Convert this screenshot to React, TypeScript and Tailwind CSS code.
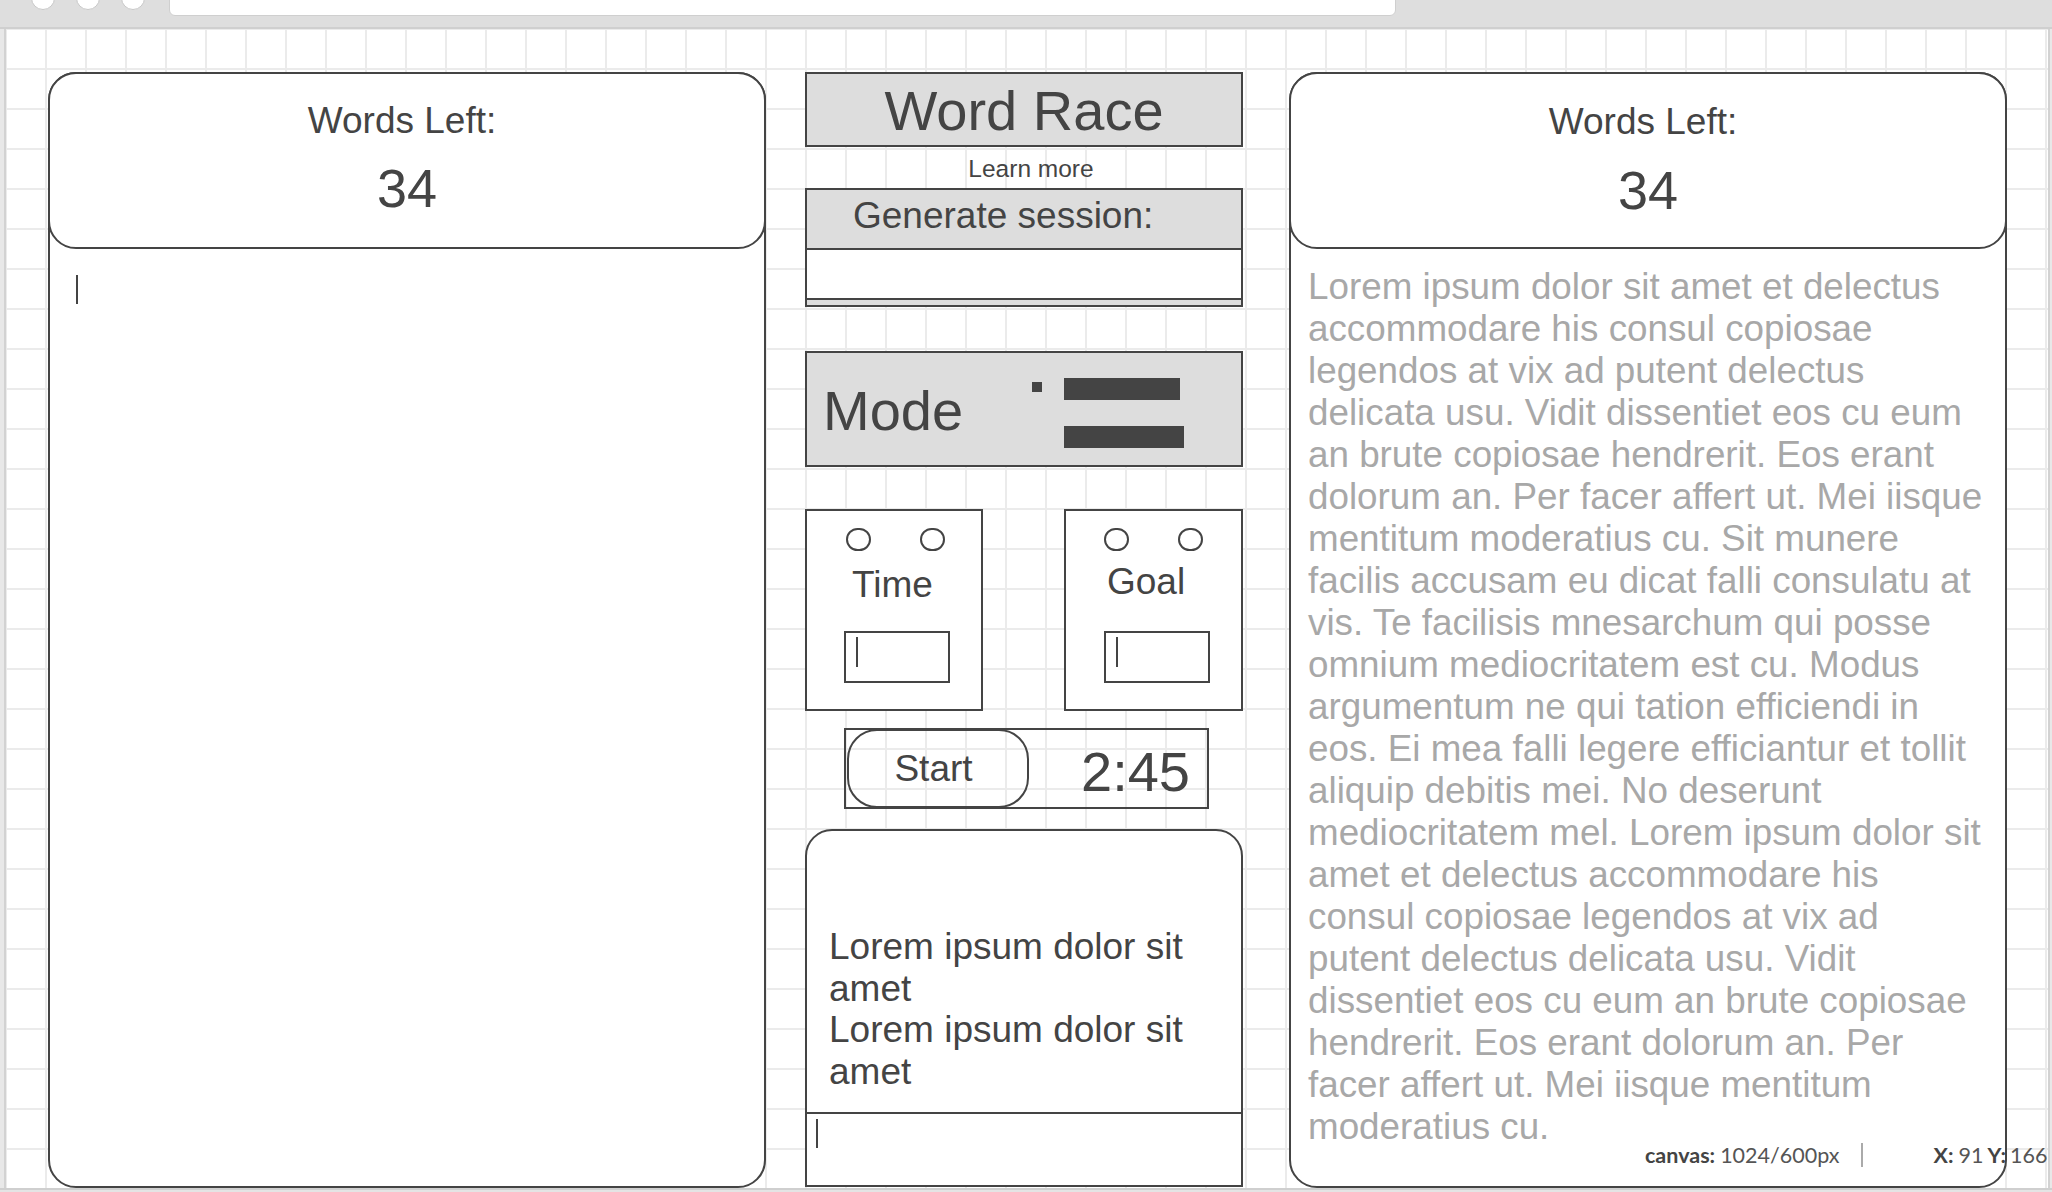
import React from "react";

const passage = [
  "Lorem ipsum dolor sit amet et delectus",
  "accommodare his consul copiosae",
  "legendos at vix ad putent delectus",
  "delicata usu. Vidit dissentiet eos cu eum",
  "an brute copiosae hendrerit. Eos erant",
  "dolorum an. Per facer affert ut. Mei iisque",
  "mentitum moderatius cu. Sit munere",
  "facilis accusam eu dicat falli consulatu at",
  "vis. Te facilisis mnesarchum qui posse",
  "omnium mediocritatem est cu. Modus",
  "argumentum ne qui tation efficiendi in",
  "eos. Ei mea falli legere efficiantur et tollit",
  "aliquip debitis mei. No deserunt",
  "mediocritatem mel. Lorem ipsum dolor sit",
  "amet et delectus accommodare his",
  "consul copiosae legendos at vix ad",
  "putent delectus delicata usu. Vidit",
  "dissentiet eos cu eum an brute copiosae",
  "hendrerit. Eos erant dolorum an. Per",
  "facer affert ut. Mei iisque mentitum",
  "moderatius cu.",
];

function Caret({ className = "" }: { className?: string }) {
  return <span className={"block w-[2px] bg-[#444] " + className} />;
}

function WordsLeft({ children, lower }: { children?: React.ReactNode; lower?: boolean }) {
  return (
    <div className="flex h-[1116px] w-[718px] shrink-0 flex-col rounded-[28px] border-2 border-[#444] bg-white">
      {/* counter header sits on top of the panel outline */}
      <div className="-mx-[2px] -mt-[2px] flex h-[177px] shrink-0 flex-col items-center rounded-[28px] border-2 border-[#444] bg-white">
        <p className={"pr-[10px] text-[37px] leading-[42px] " + (lower ? "mt-[27px]" : "mt-[26px]")}>
          Words Left:
        </p>
        <p className={"text-[54px] leading-[60px] " + (lower ? "mt-[17px]" : "mt-[16px]")}>34</p>
      </div>
      {children}
    </div>
  );
}

function OptionBox({ label, wide }: { label: string; wide?: boolean }) {
  const isTime = label === "Time";
  return (
    <div
      className={
        "flex h-[202px] flex-col items-start border-2 border-[#444] bg-white " +
        (wide ? "w-[179px]" : "w-[178px]")
      }
    >
      <div className={"mt-[17px] flex gap-[49px] " + (isTime ? "ml-[39px]" : "ml-[38px]")}>
        <span className="h-[23px] w-[25px] rounded-full border-2 border-[#444]" />
        <span className="h-[23px] w-[25px] rounded-full border-2 border-[#444]" />
      </div>
      <p
        className={
          "text-[37px] leading-[42px] " +
          (isTime ? "mt-[13px] ml-[45px]" : "mt-[10px] ml-[41px]")
        }
      >
        {label}
      </p>
      <div
        className={
          "h-[52px] w-[106px] border-2 border-[#444] " +
          (isTime ? "mt-[25px] ml-[37px]" : "mt-[28px] ml-[38px]")
        }
      >
        <Caret className="mt-[4px] ml-[10px] h-[30px]" />
      </div>
    </div>
  );
}

export default function App() {
  return (
    <div className="relative h-[1192px] w-[2052px] overflow-hidden bg-white font-['Liberation_Sans',Arial,sans-serif] text-[#444]">
      {/* browser chrome */}
      <div className="flex h-[29px] items-start border-b-2 border-[#cfcfcf] bg-[#dedede]">
        <div className="ml-[31px] -mt-[14px] flex gap-[21px]">
          <span className="h-[24px] w-[24px] rounded-full border border-[#c8c8c8] bg-white" />
          <span className="h-[24px] w-[24px] rounded-full border border-[#c8c8c8] bg-white" />
          <span className="h-[24px] w-[24px] rounded-full border border-[#c8c8c8] bg-white" />
        </div>
        <div className="-mt-px ml-[24px] h-[17px] w-[1227px] rounded-b-[6px] border border-[#cfcfcf] bg-white" />
      </div>

      <div className="flex h-[1159px]">
        <div className="w-[6px] shrink-0 border-r-2 border-[#d2d2d2] bg-[#e8e8e8]" />
        <div className="flex flex-1 items-start bg-[linear-gradient(to_right,#ebebeb_2px,transparent_2px),linear-gradient(to_bottom,#ebebeb_2px,transparent_2px)] bg-[size:40px_40px] bg-[position:39px_39px] pt-[43px] pl-[42px]">
          {/* left: typing area */}
          <WordsLeft>
            <Caret className="mt-[26px] ml-[26px] h-[29px]" />
          </WordsLeft>

          {/* middle: controls */}
          <div className="ml-[39px] flex w-[438px] shrink-0 flex-col">
            <div className="h-[75px] border-2 border-[#444] bg-[#dddddd] pt-px text-center text-[56px] leading-[72px]">
              Word Race
            </div>
            <p className="h-[41px] pt-px pl-[14px] text-center text-[24.5px] leading-[41px]">Learn more</p>
            <div className="flex h-[119px] flex-col border-2 border-[#444] bg-[#dddddd]">
              <p className="h-[58px] pl-[46px] text-[37px] leading-[51px]">Generate session:</p>
              <div className="h-[52px] border-y-2 border-[#444] bg-white" />
            </div>

            <div className="mt-[44px] flex h-[116px] items-start border-2 border-[#444] bg-[#dddddd] pl-[16px]">
              <p className="mt-[2px] w-[209px] text-[56px] leading-[112px]">Mode</p>
              <span className="mt-[29px] h-[10px] w-[10px] bg-[#444]" />
              <div className="mt-[25px] ml-[22px] flex flex-col gap-[26px]">
                <span className="h-[22px] w-[116px] bg-[#444]" />
                <span className="h-[22px] w-[120px] bg-[#444]" />
              </div>
            </div>

            <div className="mt-[42px] flex justify-between">
              <OptionBox label="Time" />
              <OptionBox label="Goal" wide />
            </div>

            <div className="mt-[17px] ml-[39px] flex h-[81px] w-[365px] items-start border-2 border-[#444]">
              <div className="-mt-px ml-px h-[79px] w-[182px] rounded-[30px] border-2 border-[#444] pr-[9px] text-center text-[37px] leading-[75px]">
                Start
              </div>
              <p className="ml-auto pr-[17px] text-[56px] leading-[83px]">2:45</p>
            </div>

            <div className="mt-[20px] flex h-[358px] flex-col rounded-t-[27px] border-2 border-[#444] bg-white">
              <div className="h-[281px] pt-[95px] pr-[16px] pl-[22px] text-[37px] leading-[41.5px]">
                <p>Lorem ipsum dolor sit amet</p>
                <p>Lorem ipsum dolor sit amet</p>
              </div>
              <div className="flex-1 border-t-2 border-[#444]">
                <Caret className="mt-[5px] ml-[9px] h-[29px]" />
              </div>
            </div>
          </div>

          {/* right: passage to type */}
          <div className="ml-[46px]">
            <WordsLeft lower>
              <div className="pt-[17px] pl-[17px] text-[36.8px] leading-[42px] whitespace-nowrap text-[#a8a8a8]">
                {passage.map((line) => (
                  <p key={line}>{line}</p>
                ))}
              </div>
            </WordsLeft>
          </div>
        </div>
        <div className="w-[4px] shrink-0 border-l-2 border-[#d2d2d2] bg-[#e8e8e8]" />
      </div>
      <div className="h-[4px] border-t-2 border-[#cfcfcf] bg-[#e4e4e4]" />

      {/* editor status readout */}
      <div className="absolute top-[1139px] left-[1645px] flex items-center font-['Lato',sans-serif] text-[21.5px] whitespace-nowrap text-[#555]">
        <span className="font-bold text-[#444]">canvas:</span>
        <span className="ml-[5px]">1024/600px</span>
        <span className="ml-[22px] h-[24px] w-[2px] bg-[#aaa]" />
        <span className="ml-[70px] font-bold text-[#444]">X:</span>
        <span className="ml-[5px]">91</span>
        <span className="ml-[4px] font-bold text-[#444]">Y:</span>
        <span className="ml-[4px]">166</span>
      </div>
    </div>
  );
}
